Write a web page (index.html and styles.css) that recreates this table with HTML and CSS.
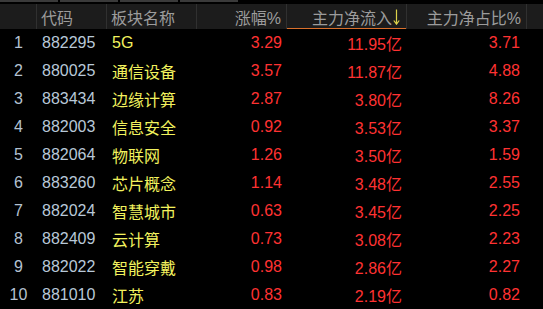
FILE: index.html
```html
<!DOCTYPE html>
<html lang="zh">
<head>
<meta charset="utf-8">
<title>板块资金流向</title>
<link rel="stylesheet" href="styles.css">
</head>
<body>
<div class="panel">
  <div class="tabs">
    <span class="tab"></span><span class="tab"></span><span class="tab"></span><span class="tab"></span>
  </div>
  <div class="grid">
    <div class="hd"></div>
    <div class="hd left">代码</div>
    <div class="hd left">板块名称</div>
    <div class="hd right">涨幅%</div>
    <div class="hd right sorted">主力净流入<svg class="arrow" width="7" height="16" viewBox="0 0 7 16"><path d="M3.5 0.5V15M0.8 11.5L3.5 15.2L6.2 11.5" fill="none" stroke="#dcd24a" stroke-width="1.2"/></svg></div>
    <div class="hd right">主力净占比%</div>
    <div class="hd last"></div>

    <div class="c idx">1</div><div class="c code">882295</div><div class="c name">5G</div><div class="c num">3.29</div><div class="c num amt">11.95亿</div><div class="c num pct">3.71</div><div class="c"></div>
    <div class="c idx">2</div><div class="c code">880025</div><div class="c name">通信设备</div><div class="c num">3.57</div><div class="c num amt">11.87亿</div><div class="c num pct">4.88</div><div class="c"></div>
    <div class="c idx">3</div><div class="c code">883434</div><div class="c name">边缘计算</div><div class="c num">2.87</div><div class="c num amt">3.80亿</div><div class="c num pct">8.26</div><div class="c"></div>
    <div class="c idx">4</div><div class="c code">882003</div><div class="c name">信息安全</div><div class="c num">0.92</div><div class="c num amt">3.53亿</div><div class="c num pct">3.37</div><div class="c"></div>
    <div class="c idx">5</div><div class="c code">882064</div><div class="c name">物联网</div><div class="c num">1.26</div><div class="c num amt">3.50亿</div><div class="c num pct">1.59</div><div class="c"></div>
    <div class="c idx">6</div><div class="c code">883260</div><div class="c name">芯片概念</div><div class="c num">1.14</div><div class="c num amt">3.48亿</div><div class="c num pct">2.55</div><div class="c"></div>
    <div class="c idx">7</div><div class="c code">882024</div><div class="c name">智慧城市</div><div class="c num">0.63</div><div class="c num amt">3.45亿</div><div class="c num pct">2.25</div><div class="c"></div>
    <div class="c idx">8</div><div class="c code">882409</div><div class="c name">云计算</div><div class="c num">0.73</div><div class="c num amt">3.08亿</div><div class="c num pct">2.23</div><div class="c"></div>
    <div class="c idx">9</div><div class="c code">882022</div><div class="c name">智能穿戴</div><div class="c num">0.98</div><div class="c num amt">2.86亿</div><div class="c num pct">2.27</div><div class="c"></div>
    <div class="c idx">10</div><div class="c code">881010</div><div class="c name">江苏</div><div class="c num">0.83</div><div class="c num amt">2.19亿</div><div class="c num pct">0.82</div><div class="c"></div>
  </div>
</div>
</body>
</html>
```

FILE: styles.css
```css
html, body {
  margin: 0;
  padding: 0;
  background: #000;
}
body {
  width: 543px;
  height: 309px;
  overflow: hidden;
  font-family: "Liberation Sans", "Noto Sans CJK SC", sans-serif;
  font-size: 16px;
}
.panel {
  width: 543px;
}
.tabs {
  display: flex;
  gap: 2px;
  height: 2px;
  margin-bottom: 2px;
}
.tab {
  width: 58px;
  height: 2px;
  background: #3a3a3a;
}
.grid {
  display: grid;
  grid-template-columns: 37px 70px 90px 90px 120px 120px 16px;
  grid-template-rows: 25px repeat(10, 28px);
}
.hd {
  background: #1c1c1c;
  color: #9c9c9c;
  border-right: 1px solid #303030;
  display: flex;
  align-items: center;
  white-space: nowrap;
  box-sizing: border-box;
}
.hd.left {
  padding-left: 4px;
}
.hd.right {
  justify-content: flex-end;
  padding-right: 5px;
}
.hd.last {
  border-right: none;
}
.hd.sorted {
  box-shadow: inset 0 -1px 0 #d9702c;
  padding-right: 6px;
}
.arrow {
  display: block;
  margin-left: 1px;
  margin-top: 1px;
}
.c {
  display: flex;
  align-items: center;
  white-space: nowrap;
}
.idx {
  justify-content: center;
  color: #b4c2d2;
}
.code {
  padding-left: 5px;
  color: #b8c8d8;
}
.name {
  padding-left: 5px;
  color: #f2f25e;
}
.num {
  justify-content: flex-end;
  padding-right: 5px;
  color: #ff3232;
}
.amt {
  padding-right: 5px;
}
.pct {
  padding-right: 7px;
}
```
